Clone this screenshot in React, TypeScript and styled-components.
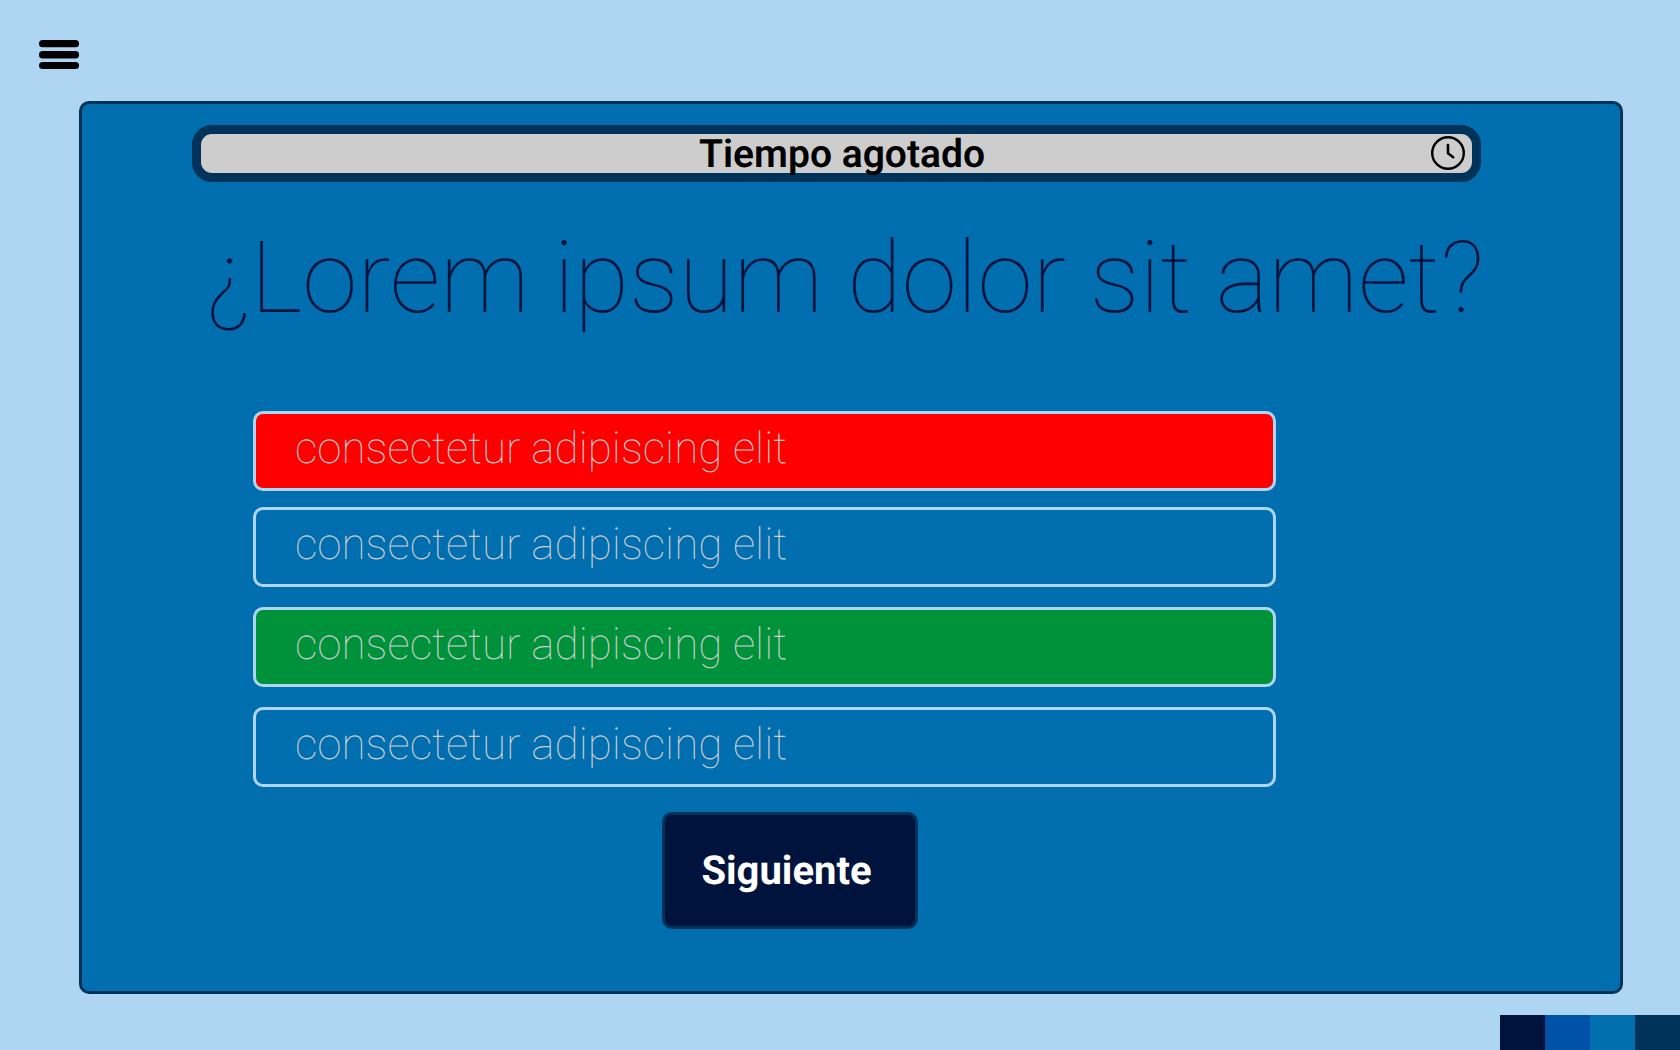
import React from 'react';
import styled, { createGlobalStyle } from 'styled-components';

const colors = {
  sky: '#aed6f3',
  blue: '#006eaf',
  deep: '#003359',
  navy: '#00133d',
  royal: '#0052a8',
  grey: '#cdcdcd',
  right: '#00923a',
  wrong: '#ff0000',
};

const GlobalStyle = createGlobalStyle`
  * { box-sizing: border-box; }
  body {
    margin: 0;
    background: ${colors.sky};
    font-family: Roboto, "Liberation Sans", sans-serif;
    text-rendering: geometricPrecision;
  }
`;

const Page = styled.div`
  min-height: 100vh;
  display: flex;
  flex-direction: column;
`;

const Header = styled.header`
  padding: 40px 39px 32px;
`;

const MenuButton = styled.button`
  display: block;
  padding: 0;
  border: 0;
  background: none;
  cursor: pointer;

  svg { display: block; }
`;

const Card = styled.main`
  flex: 1;
  display: flex;
  flex-direction: column;
  margin: 0 57px 0 79px;
  padding: 21px 139px 0 110px;
  border: 3px solid ${colors.deep};
  border-radius: 10px;
  background: ${colors.blue};
`;

const Timer = styled.div`
  display: grid;
  grid-template-columns: 52px 1fr 41px;
  align-items: center;
  height: 57px;
  border: 9px solid ${colors.deep};
  border-radius: 20px;
  background: ${colors.grey};
  color: #000;

  svg { align-self: start; margin-top: 2px; }
`;

const TimerText = styled.span`
  font-size: 39px;
  font-weight: 600;
  line-height: 40px;
  text-align: center;
`;

const Question = styled.h1`
  margin: 37px 0 0;
  padding-left: 14px;
  color: ${colors.navy};
  font-size: 100px;
  font-weight: 100;
  line-height: 120px;
  white-space: nowrap;
`;

const Answers = styled.section`
  display: flex;
  flex-direction: column;
  align-items: stretch;
  margin: 72px 205px 0 61px;
`;

const Option = styled.button<{ $fill?: string; $gap?: number }>`
  height: 80px;
  margin: 0 0 ${(p) => p.$gap ?? 20}px;
  padding: 0 39px 6px;
  border: 3px solid ${colors.sky};
  border-radius: 10px;
  background: ${(p) => p.$fill ?? 'transparent'};
  color: ${colors.grey};
  font-family: inherit;
  font-size: 44px;
  font-weight: 100;
  line-height: 52px;
  text-align: left;
  text-rendering: inherit;
  cursor: pointer;
`;

const NextButton = styled.button`
  align-self: center;
  width: 256px;
  height: 117px;
  margin-top: 5px;
  margin-right: 94px;
  padding: 0 12px 0 6px;
  border: 3px solid ${colors.deep};
  border-radius: 10px;
  background: ${colors.navy};
  color: #fff;
  font-family: inherit;
  font-size: 40px;
  font-weight: 700;
  text-rendering: inherit;
  cursor: pointer;
`;

const Footer = styled.footer`
  display: flex;
  justify-content: flex-end;
  padding-top: 21px;
`;

const Swatch = styled.div<{ $color: string }>`
  width: 45px;
  height: 35px;
  background: ${(p) => p.$color};
`;

const options = [
  { text: 'consectetur adipiscing elit', fill: colors.wrong, gap: 16 },
  { text: 'consectetur adipiscing elit' },
  { text: 'consectetur adipiscing elit', fill: colors.right },
  { text: 'consectetur adipiscing elit' },
];

const MenuIcon = () => (
  <svg width="40" height="29" viewBox="0 0 40 29" aria-hidden="true">
    <rect x="0" y="0" width="40" height="7.2" rx="3.5" />
    <rect x="0" y="11" width="40" height="7.4" rx="3.5" />
    <rect x="0" y="22" width="40" height="7" rx="3.5" />
  </svg>
);

const ClockIcon = () => (
  <svg width="34" height="34" viewBox="0 0 34 34" fill="none" stroke="#000" aria-hidden="true">
    <circle cx="17" cy="17" r="15.8" strokeWidth="2.4" />
    <path d="M17 9v8.2l5.2 4" strokeWidth="2.6" strokeLinecap="round" strokeLinejoin="round" />
  </svg>
);

export default function App() {
  return (
    <Page>
      <GlobalStyle />
      <Header>
        <MenuButton type="button" aria-label="Menú">
          <MenuIcon />
        </MenuButton>
      </Header>
      <Card>
        <Timer role="timer">
          <i />
          <TimerText>Tiempo agotado</TimerText>
          <ClockIcon />
        </Timer>
        <Question>¿Lorem ipsum dolor sit amet?</Question>
        <Answers>
          {options.map((o, i) => (
            <Option key={i} type="button" $fill={o.fill} $gap={o.gap}>
              {o.text}
            </Option>
          ))}
        </Answers>
        <NextButton type="button">Siguiente</NextButton>
      </Card>
      <Footer>
        <Swatch $color={colors.navy} />
        <Swatch $color={colors.royal} />
        <Swatch $color={colors.blue} />
        <Swatch $color={colors.deep} />
      </Footer>
    </Page>
  );
}
